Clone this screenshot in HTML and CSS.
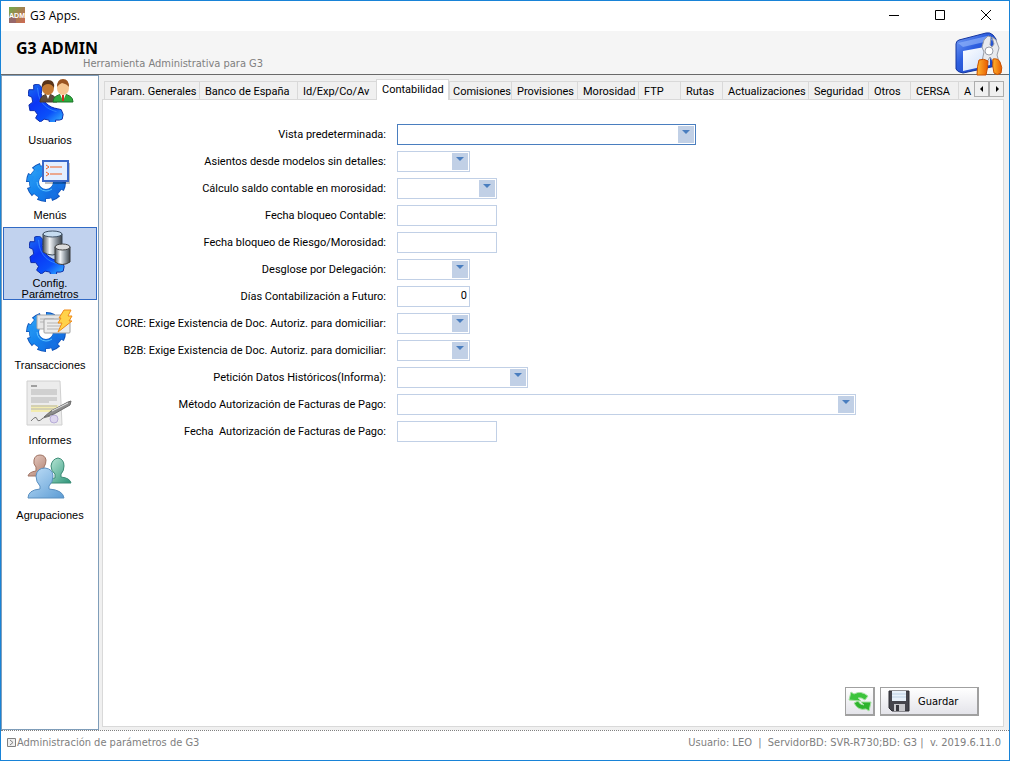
FILE: index.html
```html
<!DOCTYPE html>
<html lang="es">
<head>
  <meta charset="UTF-8" />
  <meta name="viewport" content="width=device-width, initial-scale=1.0"/>
  <title>G3 Apps.</title>
  <link rel="stylesheet" href="styles.css">
</head>
<body>
  <!-- shared icon parts -->
  <svg class="defs" width="0" height="0" aria-hidden="true">
    <defs>
      <linearGradient id="gearBlue" gradientUnits="userSpaceOnUse" x1="4" y1="0" x2="36" y2="40">
        <stop offset="0" stop-color="#1a6cf0"/>
        <stop offset="0.35" stop-color="#0a35f5"/>
        <stop offset="0.7" stop-color="#0a50fa"/>
        <stop offset="1" stop-color="#35b4ff"/>
      </linearGradient>
      <linearGradient id="gearSky" x1="0" y1="0" x2="1" y2="1">
        <stop offset="0" stop-color="#2a9cf4"/>
        <stop offset="0.5" stop-color="#1483ee"/>
        <stop offset="1" stop-color="#1566dc"/>
      </linearGradient>
      <linearGradient id="metal" x1="0" y1="0" x2="1" y2="0">
        <stop offset="0" stop-color="#4a5058"/>
        <stop offset="0.35" stop-color="#f4f6f8"/>
        <stop offset="0.65" stop-color="#9aa2aa"/>
        <stop offset="1" stop-color="#3c4248"/>
      </linearGradient>
      <linearGradient id="orange" x1="0" y1="0" x2="1" y2="0">
        <stop offset="0" stop-color="#ffb52e"/>
        <stop offset="1" stop-color="#e85c00"/>
      </linearGradient>
      <symbol id="gear" viewBox="0 0 40 40">
        <g fill="none" stroke="#0d50b8">
          <circle cx="20" cy="20" r="12" stroke-width="10"/>
          <circle cx="20" cy="20" r="17" stroke-width="6" pathLength="80" stroke-dasharray="6 4"/>
        </g>
        <g fill="none" stroke="url(#gearSky)">
          <circle cx="20" cy="20" r="12" stroke-width="9"/>
          <circle cx="20" cy="20" r="16" stroke-width="6" pathLength="80" stroke-dasharray="5 5" stroke-dashoffset="-0.5"/>
        </g>
        <path d="M11 20a9 9 0 0 0 9 9 9 9 0 0 0 6-2" fill="none" stroke="#5cc0ff"/>
      </symbol>
      <symbol id="gearArc" viewBox="0 0 40 40">
        <path d="M6 1l5-1 4 4-1 6c1 8 8 15 17 16l4 1 2 5-1 5-3 1-4 0 0 3-6 1-1-4-5-1-4 3-5-4 2-4-3-4-5 0-1-6 4-3-1-5-4-2 1-6 5 0z" fill="url(#gearBlue)" stroke="#0a28a8" stroke-linejoin="round"/>
        <path d="M10 4l1 7c2 9 9 16 19 18" fill="none" stroke="#3c98ff" opacity="0.7"/>
      </symbol>
    </defs>
  </svg>

  <div class="window">
    <header class="titlebar">
      <svg class="app-icon" viewBox="0 0 16 16" aria-hidden="true">
        <defs>
          <linearGradient id="app" x1="0" y1="0" x2="1" y2="1">
            <stop offset="0" stop-color="#6fae4c"/><stop offset="0.5" stop-color="#a57f50"/><stop offset="1" stop-color="#cf6a55"/>
          </linearGradient>
        </defs>
        <rect width="16" height="16" fill="url(#app)"/>
        <rect y="10" width="7" height="6" fill="#8a5a7c" opacity="0.6"/>
        <text x="8" y="11" text-anchor="middle" class="app-text">ADM</text>
      </svg>
      <span class="title">G3 Apps.</span>
      <div class="window-buttons">
        <button type="button" aria-label="Minimizar"><svg viewBox="0 0 12 12"><path d="M1 5.500h10"/></svg></button>
        <button type="button" aria-label="Maximizar"><svg viewBox="0 0 12 12"><path d="M1.500 0.500h9v9h-9z"/></svg></button>
        <button type="button" aria-label="Cerrar"><svg viewBox="0 0 12 12"><path d="M1 0l10 10M11 0L1 10"/></svg></button>
      </div>
    </header>

    <div class="banner">
      <div class="banner-text">
        <h1>G3 ADMIN</h1>
        <p>Herramienta Administrativa para G3</p>
      </div>
      <svg class="banner-icon" viewBox="0 0 48 44" aria-hidden="true">
        <defs>
          <linearGradient id="frame" x1="0" y1="0" x2="1" y2="1">
            <stop offset="0" stop-color="#7ba2f5"/><stop offset="0.4" stop-color="#2d5fe0"/><stop offset="1" stop-color="#163cb4"/>
          </linearGradient>
          <linearGradient id="pane" x1="0" y1="0" x2="1" y2="1">
            <stop offset="0" stop-color="#ffffff"/><stop offset="1" stop-color="#c9dcfb"/>
          </linearGradient>
        </defs>
        <path d="M1 12q0-3 3-4L31 1q4-1 7 2l3 4v27L8 41q-6-1-7-4z" fill="url(#frame)" stroke="#1536a0"/>
        <path d="M3 11L32 4l6 4-30 7z" fill="#8db0fa" opacity="0.7"/>
        <path d="M8 19l27-5v19L8 39z" fill="url(#pane)"/>
        <path d="M27 29l2-9-2-5 2-7 4-4 3 1-1 8 2 2 2-3-2-7 4 3 3 8-2 7 2 7-5 1-4-6-3 5z" fill="#e8eaee" stroke="#989ca6"/>
        <circle cx="34" cy="19" r="4" fill="#fff" stroke="#9a9ea8"/>
        <path d="M24 28q5-2 9 1 0 6-2 14h-9q0-9 2-15z" fill="url(#orange)" stroke="#c85000"/>
        <path d="M38 27q5-1 7 3 3 6 1 11-4 3-7 0-2-7-1-14z" fill="url(#orange)" stroke="#c85000"/>
      </svg>
    </div>

    <div class="body">
      <nav class="sidebar">
        <a class="item" href="#usuarios">
          <svg viewBox="0 0 48 48" aria-hidden="true">
            <use href="#gearArc" x="2" y="5" width="38" height="38"/>
            <path d="M14 23q0-7 8-8 8 1 9 8z" fill="#5c4a3c" stroke="#4c3a2e"/>
            <path d="M20 15l2 5 2-5z" fill="#fff"/>
            <ellipse cx="22" cy="9" rx="6" ry="7" fill="#c47a34"/>
            <path d="M16 9q-1-8 6-8t6 8q-2-4-6-4t-6 4z" fill="#5a3418"/>
            <path d="M27 23q0-7 10-8 10 1 10 8z" fill="#2eaa3c" stroke="#1b7428"/>
            <path d="M34 15l3 7 3-7z" fill="#fff"/><path d="M36 16h2v6h-2z" fill="#d03020"/>
            <ellipse cx="37" cy="9" rx="6" ry="7" fill="#f6c690"/>
            <path d="M31 8q0-8 6-8t6 8q-2-3-7-4-3 1-5 4z" fill="#9a5420"/>
          </svg>
          <span class="label">Usuarios</span>
        </a>
        <a class="item" href="#menus">
          <svg viewBox="0 0 48 48" aria-hidden="true">
            <use href="#gear" x="0" y="8" width="40" height="40"/>
            <rect x="19" y="9" width="25" height="21" fill="#000" opacity="0.25"/>
            <rect x="17" y="7" width="25" height="20" fill="#e4efff" stroke="#3a68c8" stroke-width="2"/>
            <path d="M20 11l3 2-3 2M24 13h12M20 18l3 2-3 2M24 20h12" fill="none" stroke="#f06020"/>
          </svg>
          <span class="label">Menús</span>
        </a>
        <a class="item selected" href="#config" aria-current="page">
          <svg viewBox="0 0 48 48" aria-hidden="true">
            <use href="#gearArc" x="3" y="7" width="38" height="38"/>
            <path d="M17 5v18q9 6 19 0V5z" fill="url(#metal)" stroke="#3a4654"/>
            <ellipse cx="26.500" cy="5" rx="9.500" ry="3" fill="#c6dcf0" stroke="#3f5266"/>
            <path d="M29 18v15q7 5 15 0V18z" fill="url(#metal)" stroke="#3c3c3c"/>
            <ellipse cx="36.500" cy="18" rx="7.500" ry="3" fill="#dcdcdc" stroke="#444"/>
          </svg>
          <span class="label">Config. Parámetros</span>
        </a>
        <a class="item" href="#transacciones">
          <svg viewBox="0 0 48 48" aria-hidden="true">
            <use href="#gear" x="0" y="8" width="40" height="40"/>
            <rect x="11" y="11" width="25" height="14" rx="1" fill="#e6e6e6" stroke="#a8a8a8"/>
            <path d="M14 15h14M14 18h10" stroke="#b4b4b4"/>
            <rect x="18" y="15" width="26" height="14" rx="1" fill="#ececec" stroke="#a0a0a0"/>
            <path d="M21 19h16M21 22h18M21 25h13" stroke="#b4b4b4"/>
            <path d="M38 6h7l-3 6h4l-3 5h3L32 28l4-9h-4l3-5h-2z" fill="#ffd24a" stroke="#f08a18"/>
          </svg>
          <span class="label">Transacciones</span>
        </a>
        <a class="item" href="#informes">
          <svg viewBox="0 0 48 48" aria-hidden="true">
            <path d="M1 2h33l2 44H1z" fill="#ececec" stroke="#d0d0d0"/>
            <path d="M5 26h27v7H5z" fill="#f3ecb0"/>
            <path d="M5 7h6" stroke="#555"/>
            <path d="M5 11h26M5 13h26M5 15h26M5 19h26M5 21h26M5 23h18M5 27h26M5 30h24" stroke="#b4b4b4"/>
            <path d="M5 42q5-6 6-2t6-1l7-2" fill="none" stroke="#777"/>
            <circle cx="28" cy="40" r="4" fill="#ddd6ee" stroke="#b8add8"/>
            <path d="M18 38l7-6 17-9 3-1-1 4-16 9z" fill="#8c8c8c" stroke="#6c6c6c"/>
            <path d="M26 32l16-8" stroke="#e8e8e8"/>
          </svg>
          <span class="label">Informes</span>
        </a>
        <a class="item" href="#agrupaciones">
          <svg viewBox="0 0 48 48" aria-hidden="true">
            <defs>
              <linearGradient id="pink" x1="0" y1="0" x2="1" y2="1"><stop offset="0" stop-color="#eed4cb"/><stop offset="1" stop-color="#a87868"/></linearGradient>
              <linearGradient id="teal" x1="0" y1="0" x2="1" y2="1"><stop offset="0" stop-color="#b8e6d6"/><stop offset="1" stop-color="#2c9478"/></linearGradient>
              <linearGradient id="blue" x1="0" y1="0" x2="1" y2="1"><stop offset="0" stop-color="#c2e0f8"/><stop offset="1" stop-color="#5c9cd4"/></linearGradient>
            </defs>
            <path d="M2 22q1-4 8-5v-4q-3-3-2-7 1-5 6-5t6 5q0 4-2 7v4l5 2v3z" fill="url(#pink)" stroke="#a07464"/>
            <path d="M24 29q1-5 5-5v-4q-4-3-4-8 1-7 7-8 6 1 6 8 0 5-3 8v3q9 1 10 6z" fill="url(#teal)" stroke="#3c8c76"/>
            <path d="M2 44q0-8 12-9v-3q-4-4-4-10 1-8 9-8 8 1 8 8 0 6-4 10v3q14 1 15 9z" fill="url(#blue)" stroke="#5a8fc0"/>
          </svg>
          <span class="label">Agrupaciones</span>
        </a>
      </nav>

      <main class="content">
        <div class="tabs" role="tablist">
          <button type="button" role="tab">Param. Generales</button>
          <button type="button" role="tab">Banco de España</button>
          <button type="button" role="tab">Id/Exp/Co/Av</button>
          <button type="button" role="tab" class="active" aria-selected="true">Contabilidad</button>
          <button type="button" role="tab">Comisiones</button>
          <button type="button" role="tab">Provisiones</button>
          <button type="button" role="tab">Morosidad</button>
          <button type="button" role="tab">FTP</button>
          <button type="button" role="tab">Rutas</button>
          <button type="button" role="tab">Actualizaciones</button>
          <button type="button" role="tab">Seguridad</button>
          <button type="button" role="tab">Otros</button>
          <button type="button" role="tab">CERSA</button>
          <button type="button" role="tab">A</button>
          <div class="scroller">
            <button type="button" aria-label="Anterior"><svg viewBox="0 0 8 8"><path d="M5 1v6L2 4z"/></svg></button>
            <button type="button" aria-label="Siguiente"><svg viewBox="0 0 8 8"><path d="M3 1v6l3-3z"/></svg></button>
          </div>
        </div>

        <form class="panel">
          <div class="fields">
            <label for="vista">Vista predeterminada:</label>
            <select id="vista" class="w-large focused"><option></option></select>

            <label for="asientos">Asientos desde modelos sin detalles:</label>
            <select id="asientos" class="w-small"><option></option></select>

            <label for="saldo">Cálculo saldo contable en morosidad:</label>
            <select id="saldo" class="w-date"><option></option></select>

            <label for="bloqueo">Fecha bloqueo Contable:</label>
            <input id="bloqueo" class="w-date" type="text">

            <label for="riesgo">Fecha bloqueo de Riesgo/Morosidad:</label>
            <input id="riesgo" class="w-date" type="text">

            <label for="desglose">Desglose por Delegación:</label>
            <select id="desglose" class="w-small"><option></option></select>

            <label for="dias">Días Contabilización a Futuro:</label>
            <input id="dias" class="w-small number" type="text" value="0">

            <label for="core">CORE: Exige Existencia de Doc. Autoriz. para domiciliar:</label>
            <select id="core" class="w-small"><option></option></select>

            <label for="b2b">B2B: Exige Existencia de Doc. Autoriz. para domiciliar:</label>
            <select id="b2b" class="w-small"><option></option></select>

            <label for="historicos">Petición Datos Históricos(Informa):</label>
            <select id="historicos" class="w-medium"><option></option></select>

            <label for="metodo">Método Autorización de Facturas de Pago:</label>
            <select id="metodo" class="w-full"><option></option></select>

            <label for="fechaPago">Fecha&nbsp; Autorización de Facturas de Pago:</label>
            <input id="fechaPago" class="w-date" type="text">
          </div>

          <div class="actions">
            <button type="button" class="btn" aria-label="Actualizar">
              <svg viewBox="0 0 24 24" aria-hidden="true">
                <path d="M1 11l2-8 3 2q7-4 14 2l-3 4q-4-3-7-2l3 3z" fill="#3cc43c" stroke="#a4e0a0"/>
                <path d="M23 13l-2 9-3-2q-8 2-12-6l4-2q2 4 6 4l-3-3z" fill="#2eb42e" stroke="#a4e0a0"/>
              </svg>
            </button>
            <button type="submit" class="btn save">
              <svg viewBox="0 0 24 24" aria-hidden="true">
                <path d="M2 2h20v20H5l-3-3z" fill="#45454c" stroke="#2c2c32"/>
                <rect x="5" y="2" width="14" height="10" fill="#e8f1fa"/>
                <path d="M5 5h14M5 8h14" stroke="#bcd0e4"/>
                <rect x="7" y="15" width="11" height="7" fill="#c8c8cc"/>
                <rect x="9" y="16" width="3" height="6" fill="#38383e"/>
              </svg>
              <span>Guardar</span>
            </button>
          </div>
        </form>
      </main>
    </div>

    <footer class="statusbar">
      <svg viewBox="0 0 9 9" aria-hidden="true"><path d="M0.500 0.500h8v8h-8zM3 2l3 2.500L3 7" fill="#f0f0f0" stroke="#808080"/></svg>
      <span>Administración de parámetros de G3</span>
      <span class="info">Usuario: LEO&nbsp; |&nbsp; ServidorBD: SVR-R730;BD: G3 |&nbsp; v. 2019.6.11.0</span>
    </footer>
  </div>
</body>
</html>
```

FILE: styles.css
```css
* {
  box-sizing: border-box;
}
body {
  margin: 0;
  font-family: "DejaVu Sans Condensed", "DejaVu Sans", sans-serif;
  font-size: 11px;
  color: #000;
}
button {
  font: inherit;
  color: inherit;
}
.defs {
  position: absolute;
}
.window {
  display: flex;
  flex-direction: column;
  min-height: 100vh;
  border: 1px solid #1883d7;
  background: #f0f0f0;
}

/* title bar */
.titlebar {
  display: flex;
  align-items: center;
  height: 30px;
  padding: 0 0 2px 8px;
  background: #fff;
}
.app-icon {
  width: 16px;
  height: 16px;
}
.app-text {
  font: bold 7px "Liberation Sans", sans-serif;
  fill: #fff;
}
.title {
  margin-left: 5px;
  font: 12px "Open Sans", sans-serif;
}
.window-buttons {
  display: flex;
  margin-left: auto;
}
.window-buttons button {
  width: 46px;
  height: 28px;
  padding: 2px 0 0;
  border: none;
  background: none;
}
.window-buttons svg {
  display: block;
  width: 12px;
  height: 12px;
  margin: 0 auto;
  fill: none;
  stroke: #000;
}

/* banner */
.banner {
  display: flex;
  justify-content: space-between;
  height: 44px;
  padding: 0 6px 0 15px;
  background: #f5f5f5;
  border-bottom: 1px solid #696969;
}
.banner h1 {
  margin: 5px 0 0;
  font: bold 16px/24px "Noto Sans", sans-serif;
}
.banner p {
  margin: 0 0 0 67px;
  line-height: 8px;
  color: #808080;
}
.banner-icon {
  width: 48px;
  height: 44px;
  margin-top: 1px;
}

/* body */
.body {
  display: flex;
  flex: 1;
}
.sidebar {
  display: flex;
  flex-direction: column;
  gap: 2px;
  width: 98px;
  padding: 1px;
  background: #fff;
  border: 1px solid #7f9db9;
}
.item {
  display: flex;
  flex-direction: column;
  align-items: center;
  height: 73px;
  padding-top: 1px;
  border: 1px solid transparent;
  overflow: hidden;
  color: #000;
  text-decoration: none;
}
.item.selected {
  background: #c1d2ee;
  border-color: #316ac5;
}
.item svg {
  flex: none;
  width: 48px;
  height: 48px;
}
.label {
  display: flex;
  flex: none;
  align-items: center;
  justify-content: center;
  width: 80px;
  height: 26px;
  font: 11px/12px "Liberation Sans", sans-serif;
  text-align: center;
}
.selected .label {
  height: 24px;
  line-height: 11px;
}
.content {
  display: flex;
  flex: 1;
  flex-direction: column;
  min-width: 0;
  padding: 4px 5px 3px 3px;
}

/* tabs */
.tabs {
  display: grid;
  grid-template-columns: 95px 98px 79px 73px 62px 66px 61px 42px 42px 86px 60px 42px 48px 16px auto;
  align-items: end;
  padding-left: 2px;
}
.tabs > button {
  height: 18px;
  padding: 1px 0 0 5px;
  border: 1px solid #d9d9d9;
  border-width: 1px 0 0 1px;
  background: #f0f0f0;
  font: 11px "Roboto", sans-serif;
  text-align: left;
  white-space: nowrap;
  overflow: hidden;
}
.tabs > button.active {
  z-index: 1;
  height: 21px;
  margin-bottom: -1px;
  padding: 0 0 2px 5px;
  border-right-width: 1px;
  background: #fff;
}
.tabs > button.active + button {
  padding-left: 3px;
}
.scroller {
  display: flex;
  align-self: start;
  margin-top: 2px;
}
.scroller button {
  flex: 1;
  height: 16px;
  padding: 0;
  border: 1px solid #adadad;
  background: #f0f0f0;
}
.scroller svg {
  display: block;
  width: 8px;
  height: 8px;
  margin: 0 auto;
}

/* form */
.panel {
  display: flex;
  flex: 1;
  flex-direction: column;
  justify-content: space-between;
  padding: 24px 24px 10px 0;
  background: #fff;
  border: 1px solid #d9d9d9;
}
.fields {
  display: grid;
  grid-template-columns: 283px 1fr;
  gap: 6px 11px;
  align-items: center;
  font-family: "Roboto", sans-serif;
}
.fields label {
  text-align: right;
  white-space: nowrap;
}
.fields input,
.fields select {
  height: 21px;
  padding: 0 2px;
  border: 1px solid #c1d0e6;
  border-radius: 0;
  background: #fff;
  font: inherit;
  appearance: none;
}
.fields select {
  background: url("data:image/svg+xml,%3Csvg xmlns='http://www.w3.org/2000/svg' width='16' height='17'%3E%3Cpath fill='%23c1d0e6' d='M0 0h16v17H0z'/%3E%3Cpath fill='%234a7ebf' d='M4 4h8L8 8z'/%3E%3C/svg%3E") no-repeat right 1px center #fff;
}
.fields select.focused {
  border-color: #4a7ebf;
}
.fields .number {
  padding-bottom: 3px;
  text-align: right;
}
.w-small {
  width: 73px;
}
.w-date {
  width: 100px;
}
.w-medium {
  width: 131px;
}
.w-large {
  width: 299px;
}
.w-full {
  width: 459px;
}
.actions {
  display: flex;
  justify-content: flex-end;
  gap: 5px;
}
.btn {
  display: flex;
  align-items: center;
  justify-content: center;
  width: 30px;
  height: 29px;
  padding: 0;
  border: 1px solid #a0a0a0;
  border-width: 1px 2px 2px 1px;
  background: linear-gradient(#fff, #e4e4ea);
}
.btn svg {
  flex: none;
  width: 24px;
  height: 24px;
}
.save {
  justify-content: flex-start;
  gap: 7px;
  width: 99px;
  padding-left: 6px;
}

/* status bar */
.statusbar {
  display: flex;
  align-items: center;
  height: 30px;
  padding: 0 8px 6px 6px;
  border-top: 1px dotted #808080;
  background: #fff;
  color: #808080;
}
.statusbar svg {
  width: 9px;
  height: 9px;
  margin-right: 1px;
}
.info {
  margin-left: auto;
}
```
